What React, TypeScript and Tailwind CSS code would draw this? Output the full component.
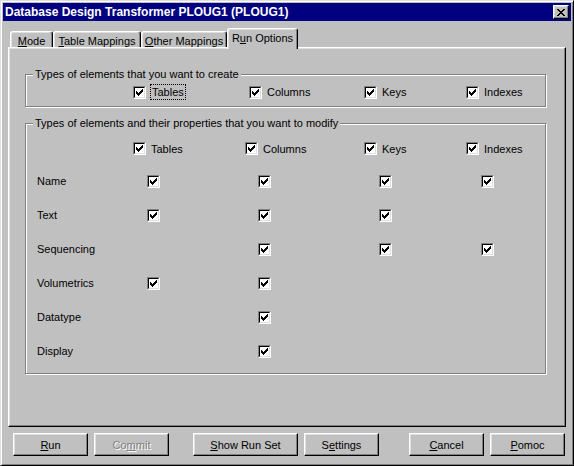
import React from 'react';

const FONT = "font-['Liberation_Sans',Arial,sans-serif]";

// rows of the "modify" group: which columns are checked
const rows: { label: string; cols: boolean[] }[] = [
  { label: 'Name', cols: [true, true, true, true] },
  { label: 'Text', cols: [true, true, true, false] },
  { label: 'Sequencing', cols: [false, true, true, true] },
  { label: 'Volumetrics', cols: [true, true, false, false] },
  { label: 'Datatype', cols: [false, true, false, false] },
  { label: 'Display', cols: [false, true, false, false] },
];

function CheckBox() {
  return (
    <span className="inline-block w-[13px] h-[13px] shrink-0 border border-t-[#808080] border-l-[#808080] border-b-white border-r-white">
      <span className="flex w-full h-full items-center justify-center bg-white border border-t-black border-l-black border-b-[#dfdfdf] border-r-[#dfdfdf]">
        <svg width="7" height="7" viewBox="0 0 7 7" shapeRendering="crispEdges">
          {[2, 3, 4, 3, 2, 1, 0].map((y, x) => (
            <rect key={x} x={x} y={y} width="1" height="3" fill="#000" />
          ))}
        </svg>
      </span>
    </span>
  );
}

function CheckItem({ label, width, focus }: { label: string; width?: string; focus?: boolean }) {
  return (
    <div className={`flex items-center ${width ?? ''}`}>
      <CheckBox />
      {focus ? (
        <span className="ml-[4px] px-[1px] border border-dotted border-black leading-[14px]">{label}</span>
      ) : (
        <span className="ml-[5px] leading-[14px]">{label}</span>
      )}
    </div>
  );
}

function Group({ label, className, children }: { label: string; className?: string; children: React.ReactNode }) {
  return (
    <div className={`relative w-[521px] border border-[#808080] shadow-[inset_1px_1px_0_#fff,1px_1px_0_#fff] ${className ?? ''}`}>
      <span className="absolute -top-[8px] left-[7px] bg-[#c0c0c0] px-[2px] leading-[14px] whitespace-nowrap">{label}</span>
      {children}
    </div>
  );
}

function Tab({ children, width, selected }: { children: React.ReactNode; width: string; selected?: boolean }) {
  if (selected) {
    return (
      <div className={`relative z-10 -mb-[2px] h-[21px] ${width} bg-[#c0c0c0] border-t border-l border-r border-t-white border-l-white border-r-black rounded-t-[3px] shadow-[inset_-1px_0_0_#808080,inset_1px_1px_0_#dfdfdf] pt-[2px] text-center leading-[14px]`}>
        {children}
      </div>
    );
  }
  return (
    <div className={`h-[16px] ${width} border-t border-l border-r border-t-white border-l-white border-r-black rounded-t-[3px] shadow-[inset_-1px_0_0_#808080,inset_1px_1px_0_#dfdfdf] pt-[2px] text-center leading-[14px] overflow-hidden`}>
      {children}
    </div>
  );
}

function Button({ children, width, ml, disabled }: { children: React.ReactNode; width: string; ml: string; disabled?: boolean }) {
  return (
    <div
      className={`${ml} ${width} h-[23px] flex items-center justify-center border border-t-white border-l-white border-r-black border-b-black shadow-[inset_-1px_-1px_0_#808080,inset_1px_1px_0_#dfdfdf] leading-[14px] ${
        disabled ? 'text-[#808080] [text-shadow:1px_1px_0_#fff]' : 'text-black'
      }`}
    >
      <span>{children}</span>
    </div>
  );
}

export default function App() {
  return (
    <div className={`${FONT} text-[11px] text-black w-[574px] h-[466px] bg-[#c0c0c0] border border-t-[#dfdfdf] border-l-[#dfdfdf] border-r-black border-b-black shadow-[inset_1px_1px_0_#fff,inset_-1px_-1px_0_#808080] p-[2px] flex flex-col`}>
      {/* title bar */}
      <div className="h-[18px] bg-[#000080] flex items-center justify-between pl-[2px] pr-[2px]">
        <span className="text-white font-bold text-[12px] leading-[14px]">Database Design Transformer PLOUG1 (PLOUG1)</span>
        <div className="w-[16px] h-[14px] flex items-center justify-center bg-[#c0c0c0] border border-t-white border-l-white border-r-black border-b-black shadow-[inset_-1px_-1px_0_#808080,inset_1px_1px_0_#dfdfdf]">
          <svg width="8" height="7" viewBox="0 0 8 7" shapeRendering="crispEdges">
            {[0, 1, 2, 3, 2, 1, 0].map((x, y) => (
              <React.Fragment key={y}>
                <rect x={x} y={y} width="2" height="1" fill="#000" />
                <rect x={6 - x} y={y} width="2" height="1" fill="#000" />
              </React.Fragment>
            ))}
          </svg>
        </div>
      </div>

      {/* tabs + panel */}
      <div className="ml-[5px] mt-[7px]">
        <div className="flex items-end h-[19px] pl-[2px]">
          <Tab width="w-[43px]"><span className="underline">M</span>ode</Tab>
          <Tab width="w-[88px]"><span className="underline">T</span>able Mappings</Tab>
          <Tab width="w-[86px]"><span className="underline">O</span>ther Mappings</Tab>
          <Tab width="w-[71px]" selected>R<span className="underline">u</span>n Options</Tab>
        </div>
        <div className="w-[558px] h-[380px] border border-t-white border-l-white border-r-black border-b-black shadow-[inset_-1px_-1px_0_#808080,inset_1px_1px_0_#dfdfdf] pl-[16px] pt-[26px]">
          <Group label="Types of elements that you want to create" className="h-[33px]">
            <div className="flex items-center pl-[107px] pt-[9px]">
              <CheckItem label="Tables" width="w-[116px]" focus />
              <CheckItem label="Columns" width="w-[115px]" />
              <CheckItem label="Keys" width="w-[102px]" />
              <CheckItem label="Indexes" />
            </div>
          </Group>

          <Group label="Types of elements and their properties that you want to modify" className="h-[251px] mt-[16px]">
            <div className="flex items-center h-[13px] pl-[107px] mt-[18px]">
              <CheckItem label="Tables" width="w-[112px]" />
              <CheckItem label="Columns" width="w-[119px]" />
              <CheckItem label="Keys" width="w-[102px]" />
              <CheckItem label="Indexes" />
            </div>
            <div className="mt-[9px]">
              {rows.map(row => (
                <div key={row.label} className="grid grid-cols-[110px_111px_121px_102px_1fr] items-center h-[34px] pl-[11px]">
                  <span className="leading-[14px]">{row.label}</span>
                  {row.cols.map((on, i) => (
                    <div key={i}>{on && <CheckBox />}</div>
                  ))}
                </div>
              ))}
            </div>
          </Group>
        </div>
      </div>

      {/* buttons */}
      <div className="flex mt-[6px]">
        <Button ml="ml-[10px]" width="w-[75px]"><span className="underline">R</span>un</Button>
        <Button ml="ml-[6px]" width="w-[75px]" disabled>Co<span className="underline">m</span>mit</Button>
        <Button ml="ml-[24px]" width="w-[105px]"><span className="underline">S</span>how Run Set</Button>
        <Button ml="ml-[6px]" width="w-[75px]">S<span className="underline">e</span>ttings</Button>
        <Button ml="ml-[30px]" width="w-[75px]"><span className="underline">C</span>ancel</Button>
        <Button ml="ml-[6px]" width="w-[75px]"><span className="underline">P</span>omoc</Button>
      </div>
    </div>
  );
}
